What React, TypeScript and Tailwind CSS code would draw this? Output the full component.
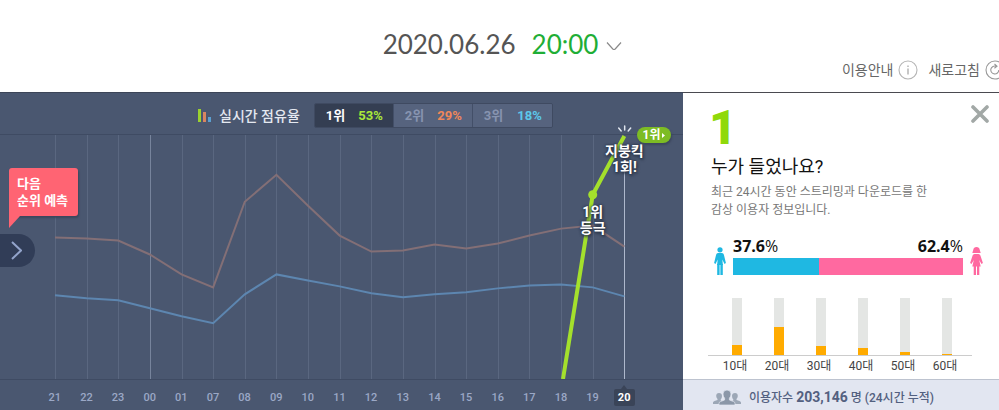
import React, { useState } from "react";

type Share = { rank: string; share: string; color: string };

const SHARES: Share[] = [
  { rank: "1위", share: "53%", color: "text-[#a9e83a]" },
  { rank: "2위", share: "29%", color: "text-[#f0875a]" },
  { rank: "3위", share: "18%", color: "text-[#5cc8ea]" },
];

const HOURS = ["21", "22", "23", "00", "01", "07", "08", "09", "10", "11", "12", "13", "14", "15", "16", "17", "18", "19", "20"];

const SECOND = [103, 104, 106, 120, 140, 153, 67, 40, 71, 101, 117, 116, 110, 114, 109, 101, 94, 91, 112];
const THIRD = [161, 164, 166, 174, 182, 189, 160, 140, 146, 152, 159, 163, 160, 158, 154, 151, 150, 153, 162];

const AGES = [
  { label: "10대", pct: 18 },
  { label: "20대", pct: 49 },
  { label: "30대", pct: 16 },
  { label: "40대", pct: 12 },
  { label: "50대", pct: 5 },
  { label: "60대", pct: 2 },
];

const W = 683;
const xAt = (i: number) => 55 + i * 31.63;
const leftAt = (i: number) => `${(xAt(i) / W) * 100}%`;
const toPoints = (ys: number[]) => ys.map((y, i) => `${xAt(i)},${y}`).join(" ");

function Header() {
  return (
    <header className="overflow-hidden bg-white pt-7 pb-3">
      <h1 className="flex h-8 items-center justify-center gap-4 pl-1.5 font-['Lato',sans-serif] text-[26px] leading-8 text-[#555]">
        2020.06.26
        <button className="flex items-center gap-2 text-[#1fae36]">
          20:00
          <svg className="mt-1 h-2 w-4" viewBox="0 0 16 8" fill="none" stroke="#8a8a8a" strokeWidth="1.2">
            <path d="M1 .5 6.8 7q1.2 1 2.4 0L15 .5" />
          </svg>
        </button>
      </h1>
      <nav className="-mr-1.5 flex h-5 items-center justify-end gap-2.5 text-sm text-[#666]">
        <a href="#guide" className="flex items-center gap-[5px]">
          이용안내
          <svg className="size-5" viewBox="0 0 20 20" fill="none" stroke="#b5b5b5" strokeWidth="1.1">
            <circle cx="10" cy="10" r="9" />
            <path d="M10 8.5v6M10 5.5v1.5" strokeWidth="1.5" />
          </svg>
        </a>
        <button className="flex items-center gap-[5px]">
          새로고침
          <svg className="size-5" viewBox="0 0 20 20" fill="none" stroke="#999" strokeWidth="1.1">
            <circle cx="10" cy="10" r="9" />
            <path d="M13.8 10a4 4 0 1 1-2.6-3.8M9.5 4l2.5 2.3-2.6 2" />
          </svg>
        </button>
      </nav>
    </header>
  );
}

function Chart() {
  const [active, setActive] = useState<number>(0);

  return (
    <section className="flex min-w-0 flex-1 flex-col border-t border-[#3c4558] bg-[#4a5770]">
      <div className="flex h-[41px] items-center pt-1 pl-[198px]">
        <svg className="size-[13px]" viewBox="0 0 13 13">
          <path fill="#9bd12f" d="M0 0h3v13H0z" />
          <path fill="#d98560" d="M5 3h3v10H5z" />
          <path fill="#5b9fd0" d="M10 8h3v5h-3z" />
        </svg>
        <h2 className="ml-2 text-sm font-medium text-[#e4e8f0]">실시간 점유율</h2>
        <div className="ml-3.5 flex h-[25px] divide-x divide-[#434f68] overflow-hidden rounded-xs border border-[#3f4a61]">
          {SHARES.map((s, i) => (
            <button
              key={s.rank}
              onClick={() => setActive(i)}
              className={`flex w-[79px] items-center justify-between pr-2.5 pl-[11px] text-[13px] font-bold ${
                active === i ? "bg-[#343e52] text-white" : "bg-[#56637e] text-[#8794b0]"
              }`}
            >
              {s.rank}
              <span className={s.color}>{s.share}</span>
            </button>
          ))}
        </div>
      </div>

      <div className="relative h-[245px] border-t border-[#3f4b63]">
        <svg className="block h-full w-full" viewBox={`0 0 ${W} 245`} preserveAspectRatio="none" fill="none">
          {HOURS.map((h, i) => (
            <path
              key={h}
              d={`M${Math.round(xAt(i)) + 0.5} ${i === 18 ? 37 : 0}V245`}
              stroke={i === 18 ? "#aeb8cc" : h === "00" ? "#77849c" : "#5a6780"}
              vectorEffect="non-scaling-stroke"
            />
          ))}
          <polyline points={toPoints(SECOND)} stroke="#836f76" strokeWidth="2" vectorEffect="non-scaling-stroke" />
          <polyline points={toPoints(THIRD)} stroke="#5d86b0" strokeWidth="2" vectorEffect="non-scaling-stroke" />
          <path d={`M563 245L${xAt(17)} 60L${xAt(18)} 1`} stroke="#a4e02c" strokeWidth="4" vectorEffect="non-scaling-stroke" />
          <path d={`M${xAt(17)} 60h.01`} stroke="#a4e02c" strokeWidth="9" strokeLinecap="round" vectorEffect="non-scaling-stroke" />
        </svg>

        {/* milestones on the leading line */}
        <p
          className="absolute top-[69px] -translate-x-1/2 text-center text-sm leading-4 font-bold whitespace-nowrap text-white [text-shadow:0_0_2px_#2c3649,0_0_3px_#2c3649,1px_2px_3px_#2c3649]"
          style={{ left: leftAt(17) }}
        >
          1위
          <br />
          등극
        </p>
        <div className="absolute -top-2.5 flex -translate-x-1/2 flex-col items-center gap-2.5" style={{ left: leftAt(18) }}>
          <svg className="h-2 w-4" viewBox="0 0 16 8" stroke="#dfe5ee" strokeWidth="1.5" strokeLinecap="round">
            <path d="M8 1v4M2 3l2.5 3M14 3l-2.5 3" />
          </svg>
          <p className="text-center text-sm leading-4 font-bold whitespace-nowrap text-white [text-shadow:0_0_2px_#2c3649,0_0_3px_#2c3649,1px_2px_3px_#2c3649]">
            지붕킥
            <br />
            1회!
          </p>
        </div>
        <button className="absolute -top-2 right-3 flex h-4 w-[34px] items-center justify-center gap-0.5 rounded-full bg-[#7dbc24] text-xs leading-4 font-bold text-white shadow-[1px_2px_2px_#3c475d]">
          1위
          <svg className="h-[5px] w-[3px]" viewBox="0 0 3 5" fill="currentColor">
            <path d="M0 0l3 2.5L0 5z" />
          </svg>
        </button>

        <div className="absolute top-[33px] left-[9px]">
          <p className="rounded-[3px] bg-[#ff6473] py-[7px] pr-2.5 pl-2 text-[13px] leading-[17px] font-bold text-white shadow-[1px_2px_2px_#3c475d]">
            다음
            <br />
            순위 예측
          </p>
          <svg className="-mt-1 h-4 w-[11px]" viewBox="0 0 11 16" fill="#ff6473">
            <path d="M0 0h11v4L0 16z" />
          </svg>
        </div>
        <button aria-label="다음" className="absolute top-[99px] left-0 flex h-[33px] w-[35px] items-center rounded-r-full bg-[#313d57] pl-[11px]">
          <svg className="h-[19px] w-[11px]" viewBox="0 0 11 19" fill="none" stroke="#93a4cb" strokeWidth="2">
            <path d="M1 1l9 8.5L1 18" />
          </svg>
        </button>
      </div>

      <ol className="grid h-[31px] grid-cols-[repeat(19,minmax(0,1fr))] items-center border-t border-[#3f4b63] pt-1 pr-[43px] pl-[39px] text-center text-[11px] leading-[17px] font-medium text-[#9ba8c6]">
        {HOURS.map((h, i) => (
          <li key={h} className="flex justify-center">
            {i === 18 ? (
              <span className="relative w-[21px] rounded-xs bg-[#3a4458] font-bold text-white">
                <span className="absolute -top-1 left-1/2 -translate-x-1/2 border-x-3 border-b-4 border-x-transparent border-b-[#3a4458]" />
                {h}
              </span>
            ) : (
              h
            )}
          </li>
        ))}
      </ol>
    </section>
  );
}

function Listeners() {
  return (
    <aside className="flex w-[316px] shrink-0 flex-col border-t border-[#4a4a50] bg-white">
      <div className="flex h-[60px] items-start justify-between pt-3 pr-2.5 pl-[26px]">
        <strong className="text-5xl leading-[46px] font-black text-[#8fd90a]">1</strong>
        <button aria-label="닫기">
          <svg className="size-[18px]" viewBox="0 0 18 18" stroke="#a2a8a6" strokeWidth="3.6" strokeLinecap="round">
            <path d="M2 2l14 14M16 2L2 16" />
          </svg>
        </button>
      </div>
      <h2 className="pl-7 text-lg leading-7 text-[#111]">누가 들었나요?</h2>
      <p className="pt-0.5 pl-7 text-xs leading-[18px] text-[#777]">
        최근 24시간 동안 스트리밍과 다운로드를 한
        <br />
        감상 이용자 정보입니다.
      </p>

      <div className="flex items-end gap-[7px] pt-[17px] pr-4 pl-[31px]">
        <svg className="h-7 w-3 shrink-0" viewBox="0 0 12 28" fill="#1fb8e2">
          <circle cx="6" cy="2.8" r="2.6" />
          <path d="M4 6h4q1.500.2 1.900 1.800l2 8.200-1.400.9-2.200-4.400.6 5.500H3.100l.6-5.500-2.200 4.400-1.400-.9 2-8.200Q2.500 6.200 4 6z" />
          <path d="M3.200 17h2.400v11H3.200zM6.400 17h2.400v11H6.400z" />
        </svg>
        <div className="flex-1">
          <div className="flex justify-between font-['Open_Sans',sans-serif] text-base leading-5 text-[#111]">
            <span>
              <b>37.6</b>%
            </span>
            <span>
              <b>62.4</b>%
            </span>
          </div>
          <div className="mt-0.5 flex h-[17px] bg-[#ff69a0]">
            <div className="w-[37.6%] bg-[#1fb8e2]" />
          </div>
        </div>
        <svg className="h-7 w-[13px] shrink-0" viewBox="0 0 13 28" fill="#ff69a0">
          <path d="M6.500 0q2.800 0 3.200 2.800l1 3.200H2.300l1-3.200Q3.700 0 6.500 0z" />
          <path d="M4.500 7h4q1.400.1 1.900 1.500l2.500 7.500-1.400.9-2.300-4 1.500 6.600H2.300l1.500-6.600-2.300 4-1.400-.9 2.500-7.500Q3.100 7.100 4.500 7z" />
          <path d="M3.700 19H6v9H3.700zM7 19h2.300v9H7z" />
        </svg>
      </div>

      <ul className="mt-[23px] mr-[27px] ml-[25px] grid grid-cols-6 pr-1 pl-2">
        {AGES.map((a) => (
          <li key={a.label} className="flex flex-col items-center">
            <div className="flex h-[57px] w-2.5 items-end bg-[#e4e6e4]">
              <div className="w-full bg-[#ffab00]" style={{ height: `${a.pct}%` }} />
            </div>
          </li>
        ))}
      </ul>
      <ul className="mr-[27px] ml-[25px] grid grid-cols-6 border-t border-[#ccc] px-1.5 text-center text-xs leading-5 text-[#444]">
        {AGES.map((a) => (
          <li key={a.label}>{a.label}</li>
        ))}
      </ul>

      <footer className="mt-auto flex h-[31px] items-center gap-2 border-t border-[#bdc3cf] bg-[#e2e6f1] pt-1 pl-[30px] text-xs whitespace-nowrap text-[#536080]">
        <svg className="h-[15px] w-7" viewBox="0 0 28 15" fill="#8b97a8">
          <path d="M6 3q3 0 3 3 0 2-1.300 3.500v1L9 11l-1.500 3H0v-1.500q0-1 1.500-1.500L4.500 10V9Q3.200 7.500 3.200 6q0-3 2.800-3zM22 3q-3 0-3 3 0 2 1.300 3.500v1L19 11l1.500 3H28v-1.500q0-1-1.500-1.500L23.500 10V9q1.300-1.500 1.300-3 0-3-2.800-3z" opacity=".8" />
          <path d="M14 0q4 0 4 4 0 2.500-1.600 4.300V10l4 1.500q1.600.5 1.600 2V15H6v-1.500q0-1.500 1.600-2l4-1.500V8.300Q10 6.500 10 4q0-4 4-4z" stroke="#e2e6f1" strokeWidth=".7" />
        </svg>
        <p className="font-medium">
          이용자수 <b className="text-sm">203,146</b> 명 (24시간 누적)
        </p>
      </footer>
    </aside>
  );
}

export default function App() {
  return (
    <div className="bg-white font-['Roboto','Noto_Sans_CJK_KR',sans-serif]">
      <Header />
      <main className="flex items-stretch">
        <Chart />
        <Listeners />
      </main>
    </div>
  );
}
